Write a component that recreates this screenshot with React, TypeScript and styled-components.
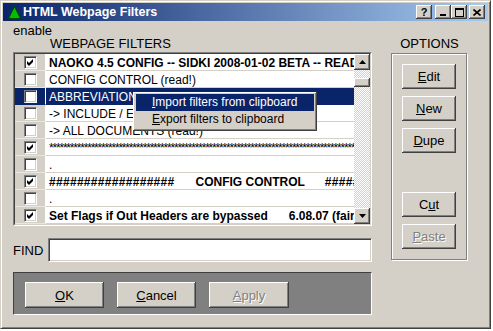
import React from "react";
import styled, { createGlobalStyle } from "styled-components";

const GlobalStyle = createGlobalStyle`
  html, body { margin: 0; padding: 0; background: #ffffff; }
  body { font-family: "Liberation Sans", Arial, sans-serif; }
  * { box-sizing: border-box; }
`;

const NAVY = "#0a246a";
const FACE = "#d4d0c8";

const raised = `box-shadow: inset -1px -1px 0 #404040, inset 1px 1px 0 #ffffff, inset -2px -2px 0 #808080, inset 2px 2px 0 ${FACE};`;

const Window = styled.div`
  width: 491px;
  height: 329px;
  background: ${FACE};
  border-style: solid;
  border-width: 1px;
  border-color: ${FACE} #404040 #404040 ${FACE};
  box-shadow: inset 1px 1px 0 #ffffff, inset -1px -1px 0 #808080;
  padding: 2px;
  display: flex;
  flex-direction: column;
  font-family: "Liberation Sans", Arial, sans-serif;
  color: #000;
`;

const TitleBar = styled.div`
  height: 18px;
  flex: none;
  display: flex;
  align-items: center;
  padding: 0 3px 0 5px;
  background: linear-gradient(to right, ${NAVY}, #a6caf0);
`;

const TitleText = styled.span`
  margin-left: 2px;
  color: #ffffff;
  font-weight: bold;
  font-size: 12.5px;
  white-space: nowrap;
`;

const CaptionButtons = styled.div`
  margin-left: auto;
  display: flex;
  align-items: center;
`;

const CaptionButton = styled.div<{ $gap?: number }>`
  width: 16px;
  height: 14px;
  margin-left: ${(p) => p.$gap ?? 0}px;
  background: ${FACE};
  ${raised}
  display: flex;
  align-items: center;
  justify-content: center;
  font-weight: bold;
  font-size: 11px;
  line-height: 14px;
`;

const Body = styled.div`
  flex: 1;
  display: flex;
  flex-direction: column;
  padding: 3px 0 0 10px;
`;

const Label = styled.div`
  font-size: 13px;
  line-height: 13px;
  height: 13px;
  white-space: nowrap;
`;

const Main = styled.div`
  display: grid;
  grid-template-columns: 359px 77px;
  column-gap: 19px;
  align-items: start;
`;

const Column = styled.div`
  display: flex;
  flex-direction: column;
`;

const SectionTitle = styled(Label)<{ $indent?: number; $center?: boolean }>`
  padding-left: ${(p) => p.$indent ?? 0}px;
  text-align: ${(p) => (p.$center ? "center" : "left")};
`;

const ListOuter = styled.div`
  margin-top: 2px;
  height: 174px;
  position: relative;
  border: 1px solid;
  border-color: #808080 #ffffff #ffffff #808080;
`;

const ListInner = styled.div`
  height: 100%;
  border: 1px solid;
  border-color: #404040 ${FACE} ${FACE} #404040;
  display: flex;
`;

const Rows = styled.div`
  flex: 1;
  overflow: hidden;
  background: #ffffff;
`;

const Row = styled.div`
  display: grid;
  grid-template-columns: 31px 1fr;
  height: 17px;
`;

const CheckCell = styled.div<{ $selected?: boolean }>`
  background: ${(p) => (p.$selected ? NAVY : FACE)};
  border-bottom: 1px solid ${(p) => (p.$selected ? NAVY : "#e9e7e2")};
  border-right: 1px solid #ffffff;
  display: flex;
  align-items: center;
  justify-content: center;
`;

const CheckBox = styled.div`
  width: 13px;
  height: 13px;
  background: #ffffff;
  border: 1px solid;
  border-color: #808080 #ffffff #ffffff #808080;
  box-shadow: inset 1px 1px 0 #404040, inset -1px -1px 0 ${FACE};
  display: flex;
  align-items: center;
  justify-content: center;
`;

const TextCell = styled.div<{ $selected?: boolean; $bold?: boolean }>`
  padding: 2px 0 0 3px;
  line-height: 14px;
  font-size: 12px;
  font-weight: ${(p) => (p.$bold ? "bold" : "normal")};
  color: ${(p) => (p.$selected ? "#ffffff" : "#000000")};
  background: ${(p) => (p.$selected ? NAVY : "#ffffff")};
  border-bottom: 1px solid ${(p) => (p.$selected ? NAVY : FACE)};
  white-space: pre;
  overflow: hidden;
`;

const Stars = styled.span`
  letter-spacing: -1.2px;
`;

const Hashes = styled.span`
  letter-spacing: 0.3px;
`;

const Gap = styled.span<{ $w: number }>`
  display: inline-block;
  width: ${(p) => p.$w}px;
`;

const ScrollBar = styled.div`
  width: 16px;
  flex: none;
  display: flex;
  flex-direction: column;
  background: repeating-conic-gradient(${FACE} 0 25%, #ffffff 0 50%) 0 0 / 2px 2px;
`;

const ScrollArrow = styled.div`
  width: 16px;
  height: 16px;
  flex: none;
  background: ${FACE};
  ${raised}
  display: flex;
  align-items: center;
  justify-content: center;
`;

const Track = styled.div`
  flex: 1;
  padding-top: 8px;
`;

const Thumb = styled.div`
  height: 9px;
  background: ${FACE};
  ${raised}
`;

const Menu = styled.div`
  position: absolute;
  left: 119px;
  top: 39px;
  width: 184px;
  height: 39px;
  background: ${FACE};
  ${raised}
  padding: 2px 3px 1px 3px;
  z-index: 2;
`;

const MenuItem = styled.div<{ $active?: boolean }>`
  height: 17px;
  line-height: 17px;
  padding-left: 16px;
  font-size: 12px;
  white-space: nowrap;
  background: ${(p) => (p.$active ? NAVY : "transparent")};
  color: ${(p) => (p.$active ? "#ffffff" : "#000000")};
`;

const GroupBox = styled.div`
  margin-top: 3px;
  width: 76px;
  height: 207px;
  border: 1px solid #808080;
  box-shadow: inset 1px 1px 0 #ffffff, 1px 1px 0 #ffffff;
  display: flex;
  flex-direction: column;
  align-items: center;
  padding-top: 10px;
  gap: 7px;
`;

const Slot = styled.div`
  height: 25px;
`;

const Button = styled.div<{ $w: number; $h: number; $disabled?: boolean }>`
  width: ${(p) => p.$w}px;
  height: ${(p) => p.$h}px;
  flex: none;
  background: ${FACE};
  ${raised}
  display: flex;
  align-items: center;
  justify-content: center;
  font-size: 13px;
  color: ${(p) => (p.$disabled ? "#808080" : "#000000")};
  text-shadow: ${(p) => (p.$disabled ? "1px 1px 0 #ffffff" : "none")};
`;

const FindRow = styled.div`
  margin-top: 12px;
  display: flex;
  align-items: center;
`;

const FindLabel = styled(Label)`
  width: 35px;
  flex: none;
`;

const Input = styled.div`
  flex: 1;
  height: 24px;
  background: #ffffff;
  border: 1px solid;
  border-color: #808080 #ffffff #ffffff #808080;
  box-shadow: inset 1px 1px 0 #404040, inset -1px -1px 0 ${FACE};
`;

const ButtonPanel = styled.div`
  margin-top: 10px;
  height: 43px;
  background: #808080;
  border: 1px solid;
  border-color: #404040 #ffffff #ffffff #404040;
  display: flex;
  gap: 13px;
  padding: 9px 0 0 11px;
`;

const Check = () => (
  <svg width="9" height="9" viewBox="0 0 9 9">
    <polygon points="1,3 3,5 7,1 7,4 3,8 1,6" fill="#000" />
  </svg>
);

const Arrow = ({ down }: { down?: boolean }) => (
  <svg width="7" height="4" viewBox="0 0 7 4">
    <polygon points={down ? "0,0 7,0 3.5,4" : "3.5,0 7,4 0,4"} fill="#000" />
  </svg>
);

type RowData = {
  checked: boolean;
  bold?: boolean;
  selected?: boolean;
  content: React.ReactNode;
};

const rows: RowData[] = [
  { checked: true, bold: true, content: "NAOKO 4.5 CONFIG -- SIDKI 2008-01-02 BETA -- READ ME FIRST" },
  { checked: false, content: "CONFIG CONTROL (read!)" },
  { checked: false, selected: true, content: "ABBREVIATIONS (read!)" },
  { checked: false, content: "-> INCLUDE / EXCLUDE (read!)" },
  { checked: false, content: "-> ALL DOCUMENTS (read!)" },
  { checked: true, content: <Stars>{"*".repeat(100)}</Stars> },
  { checked: false, content: "." },
  {
    checked: true,
    bold: true,
    content: (
      <>
        <Hashes>{"##################"}</Hashes>
        <Gap $w={21} />
        {"CONFIG CONTROL"}
        <Gap $w={20} />
        <Hashes>{"##################"}</Hashes>
      </>
    ),
  },
  { checked: false, content: "." },
  {
    checked: true,
    bold: true,
    content: (
      <>
        {"Set Flags if Out Headers are bypassed"}
        <Gap $w={21} />
        {"6.08.07 (fair)"}
      </>
    ),
  },
];

export default function App() {
  return (
    <>
      <GlobalStyle />
      <Window>
        <TitleBar>
          <svg width="13" height="13" viewBox="0 0 13 13">
            <polygon points="6.5,0.5 12.5,12.5 0.5,12.5" fill="#00c000" stroke="#004000" strokeWidth="1" />
          </svg>
          <TitleText>HTML Webpage Filters</TitleText>
          <CaptionButtons>
            <CaptionButton>?</CaptionButton>
            <CaptionButton $gap={3}>
              <svg width="8" height="8" viewBox="0 0 8 8">
                <rect x="1" y="6" width="6" height="2" fill="#000" />
              </svg>
            </CaptionButton>
            <CaptionButton>
              <svg width="9" height="9" viewBox="0 0 9 9">
                <rect x="0.5" y="0.5" width="8" height="8" fill="none" stroke="#000" />
                <rect x="0" y="1" width="9" height="1" fill="#000" />
              </svg>
            </CaptionButton>
            <CaptionButton $gap={2}>
              <svg width="8" height="7" viewBox="0 0 8 7">
                <path d="M0.5 0.5 L7.5 6.5 M7.5 0.5 L0.5 6.5" stroke="#000" strokeWidth="1.6" />
              </svg>
            </CaptionButton>
          </CaptionButtons>
        </TitleBar>
        <Body>
          <Label>enable</Label>
          <Main>
            <Column>
              <SectionTitle $indent={37}>WEBPAGE FILTERS</SectionTitle>
              <ListOuter>
                <ListInner>
                  <Rows>
                    {rows.map((r, i) => (
                      <Row key={i}>
                        <CheckCell $selected={r.selected}>
                          <CheckBox>{r.checked && <Check />}</CheckBox>
                        </CheckCell>
                        <TextCell $selected={r.selected} $bold={r.bold}>
                          {r.content}
                        </TextCell>
                      </Row>
                    ))}
                  </Rows>
                  <ScrollBar>
                    <ScrollArrow>
                      <Arrow />
                    </ScrollArrow>
                    <Track>
                      <Thumb />
                    </Track>
                    <ScrollArrow>
                      <Arrow down />
                    </ScrollArrow>
                  </ScrollBar>
                </ListInner>
                <Menu>
                  <MenuItem $active>
                    <u>I</u>mport filters from clipboard
                  </MenuItem>
                  <MenuItem>
                    <u>E</u>xport filters to clipboard
                  </MenuItem>
                </Menu>
              </ListOuter>
              <FindRow>
                <FindLabel>FIND</FindLabel>
                <Input />
              </FindRow>
              <ButtonPanel>
                <Button $w={79} $h={26}>
                  <u>O</u>K
                </Button>
                <Button $w={79} $h={26}>
                  <u>C</u>ancel
                </Button>
                <Button $w={80} $h={26} $disabled>
                  <u>A</u>pply
                </Button>
              </ButtonPanel>
            </Column>
            <Column>
              <SectionTitle $center>OPTIONS</SectionTitle>
              <GroupBox>
                <Button $w={54} $h={25}>
                  <u>E</u>dit
                </Button>
                <Button $w={54} $h={25}>
                  <u>N</u>ew
                </Button>
                <Button $w={54} $h={25}>
                  <u>D</u>upe
                </Button>
                <Slot />
                <Button $w={54} $h={25}>
                  C<u>u</u>t
                </Button>
                <Button $w={54} $h={25} $disabled>
                  <u>P</u>aste
                </Button>
              </GroupBox>
            </Column>
          </Main>
        </Body>
      </Window>
    </>
  );
}
